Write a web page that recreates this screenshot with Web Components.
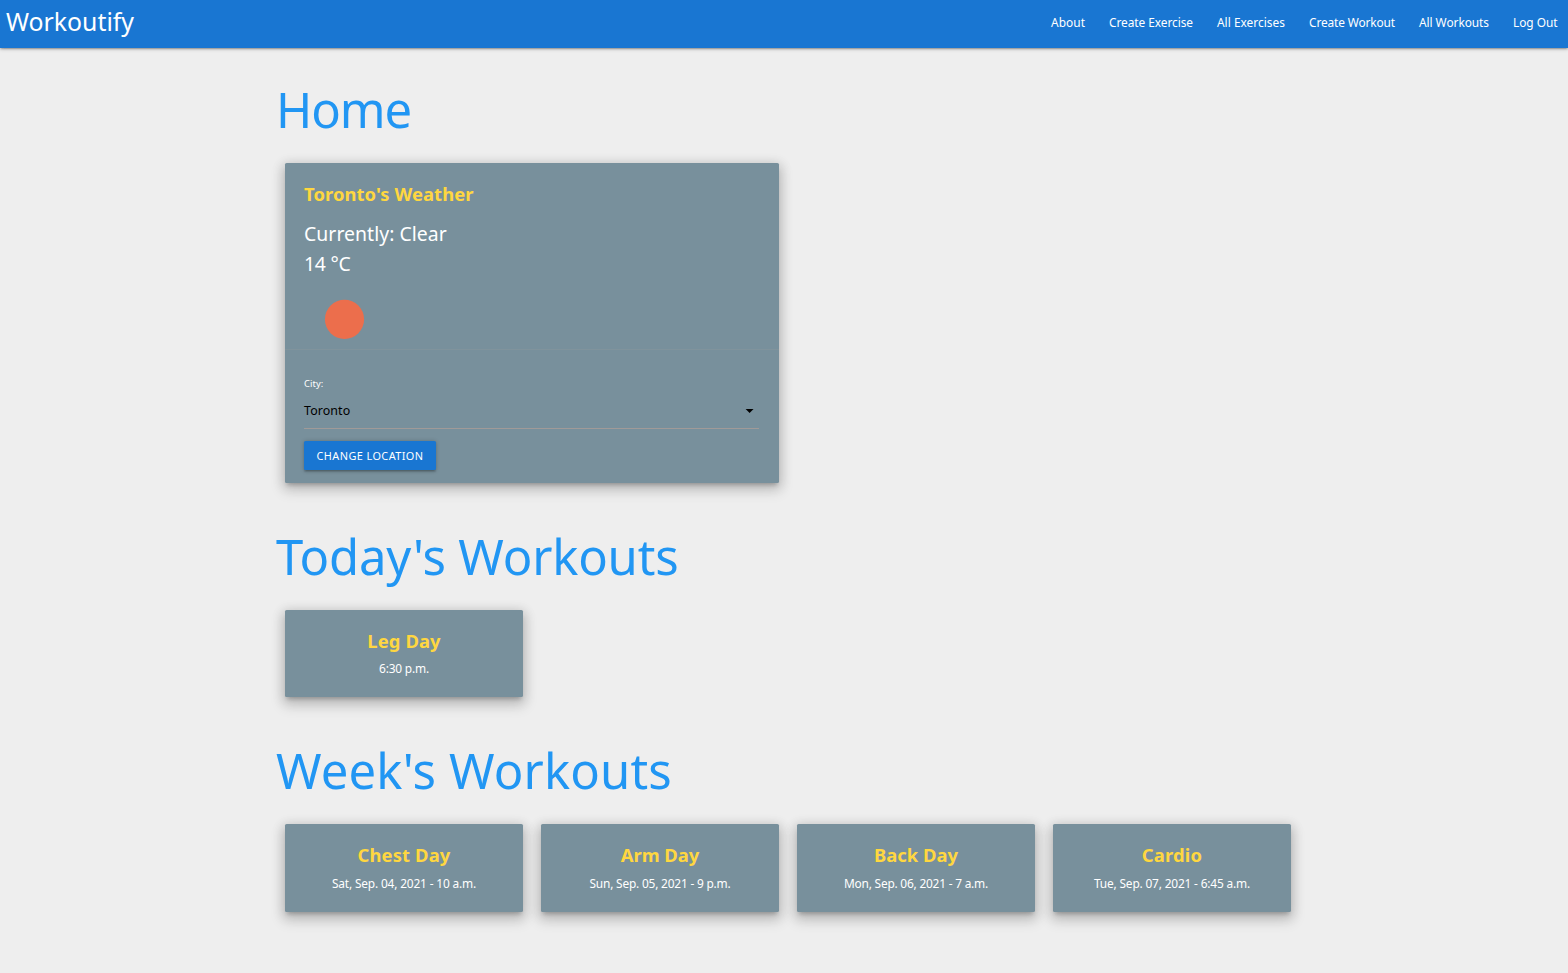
<!DOCTYPE html>
<html lang="en">
<head>
<meta charset="utf-8">
<title>Workoutify</title>
<style>
  html { background: #eee; }
  body { margin: 0; font-family: "Noto Sans", "Open Sans", sans-serif; font-size: 11.9px; line-height: 1.5; color: #fff; }
</style>
</head>
<body>
<app-page></app-page>
<script>
const define = (name, html, ready) => {
  const template = document.createElement('template');
  template.innerHTML = html;
  customElements.define(name, class extends HTMLElement {
    constructor() {
      super();
      this.attachShadow({ mode: 'open' }).append(template.content.cloneNode(true));
    }
    connectedCallback() { if (ready) ready(this); }
  });
};

// A run of text tracked so that it fills the width given in "w".
define('fit-text', `
  <style>
    :host { display: inline-block; white-space: nowrap; text-align: left; }
  </style><slot></slot>`, el => {
  const target = parseFloat(el.getAttribute('w'));
  const natural = el.getBoundingClientRect().width;
  el.style.letterSpacing = ((target - natural) / el.textContent.length) + 'px';
  el.style.width = target + 'px';
});

define('nav-bar', `
  <style>
    :host { display: flex; justify-content: space-between; height: 48px; box-sizing: border-box; padding: 0 10.5px 0 6px;
      background: #1976d2; color: #fff; position: relative;
      box-shadow: 0 1.6px 1.6px rgba(0,0,0,.14), 0 2.4px .8px -1.6px rgba(0,0,0,.12), 0 .8px 4px rgba(0,0,0,.2); }
    .brand { font-size: 24.8px; line-height: 43.5px; }
    nav { display: flex; gap: 24px; font-size: 11.9px; line-height: 45px; }
  </style>
  <div class="brand"><fit-text w="128">Workoutify</fit-text></div>
  <nav><slot></slot></nav>`);

define('page-heading', `
  <style>
    :host { display: block; margin: 33.6px 0 20.16px; font-size: 49px; line-height: 55.44px; color: #2196f3; }
  </style><slot></slot>`);

define('card-grid', `
  <style>
    :host { display: grid; grid-template-columns: repeat(4, 238px); gap: 18px; padding: 6px 9px 12px; }
  </style><slot></slot>`);

define('ui-card', `
  <style>
    :host { display: block; border-radius: 1.6px; background: #78909c; color: #fff;
      box-shadow: 0 6.4px 13.6px 1.6px rgba(0,0,0,.14), 0 2.4px 11.2px 1.6px rgba(0,0,0,.12), 0 4px 4px -2.4px rgba(0,0,0,.2); }
  </style><slot></slot>`);

define('workout-card', `
  <style>
    :host { display: block; }
    ui-card { height: var(--card-height, 87.6px); box-sizing: border-box; padding-top: 18.2px; text-align: center; }
    .title { font-size: 18.4px; font-weight: 700; line-height: 25.6px; color: #ffd740; }
    .date { margin-top: var(--date-gap, 6.4px); line-height: 18px; }
  </style>
  <ui-card>
    <div class="title"><slot name="title"></slot></div>
    <div class="date"><slot></slot></div>
  </ui-card>`);

define('city-select', `
  <style>
    :host { display: flex; align-items: center; justify-content: space-between; height: 34.8px; margin-top: 2px;
      border-bottom: 1px solid #a09a98; font-size: 12.4px; color: #000; }
    .value { padding-top: 1.4px; }
    svg { display: block; width: 19.2px; height: 19.2px; margin-top: -1.2px; }
  </style>
  <div class="value"><slot></slot></div>
  <svg viewBox="0 0 24 24"><path d="M7 10l5 5 5-5z"/></svg>`);

define('raised-button', `
  <style>
    :host { display: inline-block; height: 29px; box-sizing: border-box; padding: 0 12.5px; border-radius: 1.6px; background: #1976d2;
      font-size: 10.9px; line-height: 29px; text-transform: uppercase; vertical-align: top;
      box-shadow: 0 1.6px 1.6px rgba(0,0,0,.14), 0 2.4px .8px -1.6px rgba(0,0,0,.12), 0 .8px 4px rgba(0,0,0,.2); }
  </style><slot></slot>`);

define('weather-card', `
  <style>
    :host { display: block; grid-column: span 2; }
    ui-card { height: 319.8px; }
    .content { box-sizing: border-box; height: 186px; padding: 18.2px 19px 0; }
    .title { font-size: 18.4px; font-weight: 700; line-height: 25.6px; color: #ffd740; }
    .now { margin-top: 12.4px; font-size: 19.4px; line-height: 30px; }
    .icon { display: block; width: 80px; height: 80px; margin-top: -.2px; }
    .action { border-top: 1px solid rgba(160,160,160,.2); padding: 26.8px 20px 0 19px; }
    .label { font-size: 9.3px; line-height: 14.4px; }
    raised-button { margin-top: 12px; }
  </style>
  <ui-card>
    <div class="content">
      <div class="title"><fit-text w="169.5">Toronto's Weather</fit-text></div>
      <div class="now">
        <div><fit-text w="142.8">Currently: Clear</fit-text></div>
        <div><fit-text w="46.5">14 °C</fit-text></div>
      </div>
      <svg class="icon" viewBox="0 0 80 80"><circle cx="40.5" cy="40.3" r="19.6" fill="#ec6e4c"/></svg>
    </div>
    <div class="action">
      <div class="label"><fit-text w="19.5">City:</fit-text></div>
      <city-select><fit-text w="46.3">Toronto</fit-text></city-select>
      <raised-button><fit-text w="107">CHANGE LOCATION</fit-text></raised-button>
    </div>
  </ui-card>`);

define('app-page', `
  <style>
    :host { display: block; height: 973px; overflow: hidden; }
    main { width: 1024px; margin: 0 0 0 276px; }
    main, section { display: flow-root; }
    .today { --card-height: 86.8px; --date-gap: 5.4px; }
  </style>
  <nav-bar>
    <fit-text w="34">About</fit-text>
    <fit-text w="84">Create Exercise</fit-text>
    <fit-text w="68">All Exercises</fit-text>
    <fit-text w="86">Create Workout</fit-text>
    <fit-text w="70">All Workouts</fit-text>
    <fit-text w="44.5">Log Out</fit-text>
  </nav-bar>
  <main>
    <section>
      <page-heading><fit-text w="135">Home</fit-text></page-heading>
      <card-grid><weather-card></weather-card></card-grid>
    </section>
    <section class="today">
      <page-heading><fit-text w="402.5">Today's Workouts</fit-text></page-heading>
      <card-grid>
        <workout-card><fit-text slot="title" w="73.5">Leg Day</fit-text><fit-text w="50">6:30 p.m.</fit-text></workout-card>
      </card-grid>
    </section>
    <section>
      <page-heading><fit-text w="396">Week's Workouts</fit-text></page-heading>
      <card-grid>
        <workout-card><fit-text slot="title" w="93">Chest Day</fit-text><fit-text w="144">Sat, Sep. 04, 2021 - 10 a.m.</fit-text></workout-card>
        <workout-card><fit-text slot="title" w="78.5">Arm Day</fit-text><fit-text w="141">Sun, Sep. 05, 2021 - 9 p.m.</fit-text></workout-card>
        <workout-card><fit-text slot="title" w="84">Back Day</fit-text><fit-text w="144">Mon, Sep. 06, 2021 - 7 a.m.</fit-text></workout-card>
        <workout-card><fit-text slot="title" w="60.5">Cardio</fit-text><fit-text w="156">Tue, Sep. 07, 2021 - 6:45 a.m.</fit-text></workout-card>
      </card-grid>
    </section>
  </main>`);
</script>
</body>
</html>
